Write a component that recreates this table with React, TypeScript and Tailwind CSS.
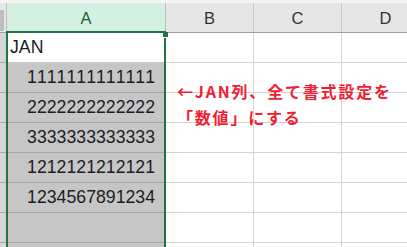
import React from "react";

const rows: { value: string; selected: boolean }[] = [
  { value: "JAN", selected: false },
  { value: "1111111111111", selected: true },
  { value: "2222222222222", selected: true },
  { value: "3333333333333", selected: true },
  { value: "1212121212121", selected: true },
  { value: "1234567891234", selected: true },
  { value: "", selected: true },
  { value: "", selected: true },
];

function HeaderCell({ label, active }: { label: string; active?: boolean }) {
  return (
    <div
      className={
        active
          ? "w-[159px] shrink-0 h-full flex items-center justify-center bg-[#d3f0e0] border-r border-[#bdbdbd] text-[#1d5e39]"
          : "w-[88px] shrink-0 h-full flex items-center justify-center bg-[#e6e6e6] border-r border-[#c8c8c8] text-[#333]"
      }
    >
      <span className="text-[16.5px] leading-none pt-[1px]">{label}</span>
    </div>
  );
}

export default function App() {
  return (
    <div
      className="relative w-[407px] h-[247px] overflow-hidden bg-white [font-kerning:none]"
      style={{ fontFamily: '"Liberation Sans", Arial, sans-serif' }}
    >
      {/* strip above the column headers */}
      <div className="h-[3px] bg-[#f4f4f4]" />

      {/* column headers */}
      <div className="flex h-[30px] border-b border-[#9e9e9e]">
        <div className="relative w-[7px] shrink-0 h-full bg-[#e6e6e6] border-r border-[#bdbdbd] overflow-hidden">
          <div className="absolute left-0 top-[7px] w-[4px] h-[21px] bg-[#bfbfbf]" />
        </div>
        <HeaderCell label="A" active />
        <HeaderCell label="B" />
        <HeaderCell label="C" />
        <HeaderCell label="D" />
      </div>

      {/* grid rows */}
      {rows.map((r, i) => (
        <div key={i} className="flex h-[30px]">
          <div className="w-[7px] shrink-0 h-full bg-[#d6d6d6] border-b border-[#a8a8a8]" />
          <div
            className={
              r.selected
                ? "w-[159px] shrink-0 h-full bg-[#c6c6c6] border-b border-r border-[#a6a6a6] flex items-center justify-end pr-[10px] text-[17.7px] text-[#1c1c24]"
                : "w-[159px] shrink-0 h-full bg-white border-b border-r border-[#c6c6c6] flex items-center justify-start pl-[3px] text-[17.7px] text-[#1c1c24]"
            }
          >
            <span className="leading-none">{r.value}</span>
          </div>
          <div className="w-[88px] shrink-0 h-full border-b border-r border-[#d4d4d4]" />
          <div className="w-[88px] shrink-0 h-full border-b border-r border-[#d4d4d4]" />
          <div className="w-[88px] shrink-0 h-full border-b border-r border-[#d4d4d4]" />
        </div>
      ))}

      {/* selection outline over column A */}
      <div className="absolute left-[6px] top-[31px] w-[160px] h-[260px] border-2 border-[#217346]" />
      {/* fill handle */}
      <div className="absolute left-[163px] top-[32px] w-[5px] h-[6px] bg-[#217346] border-b border-white" />

      {/* note floating over the sheet */}
      <div
        className="absolute left-[177px] top-[78px] text-[16px] leading-[26px] font-bold text-[#f01e32] tracking-[1.8px] whitespace-nowrap"
        style={{ fontFamily: '"Noto Sans CJK JP", "Noto Sans", sans-serif' }}
      >
        <div>←JAN列、全て書式設定を</div>
        <div>「数値」にする</div>
      </div>
    </div>
  );
}
